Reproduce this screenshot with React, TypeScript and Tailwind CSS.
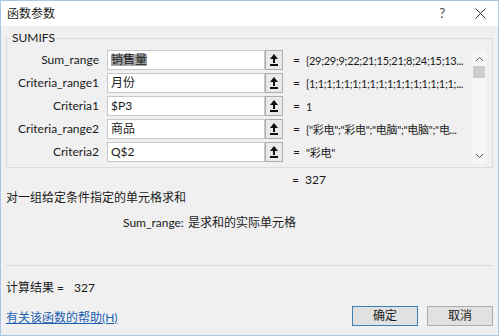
import React from "react";

const FONT = 'Lato, "Noto Sans CJK SC", sans-serif';

const rows = [
  { label: "Sum_range", value: "销售量", highlight: true, result: "{29;29;9;22;21;15;21;8;24;15;13..." },
  { label: "Criteria_range1", value: "月份", result: "{1;1;1;1;1;1;1;1;1;1;1;1;1;1;1;1;1;..." },
  { label: "Criteria1", value: "$P3", result: "1" },
  { label: "Criteria_range2", value: "商品", result: '{"彩电";"彩电";"电脑";"电脑";"电...' },
  { label: "Criteria2", value: "Q$2", result: '"彩电"' },
];

function UpButton() {
  return (
    <div className="w-[18px] h-[20px] border border-[#adadad] bg-[#e9e9e9] flex items-center justify-center">
      <svg width="8" height="12" viewBox="0 0 8 12">
        <path d="M4 0 L8 5 L5 5 L5 9 L3 9 L3 5 L0 5 Z" fill="#111" />
        <rect x="0" y="10" width="8" height="2" fill="#111" />
      </svg>
    </div>
  );
}

export default function App() {
  return (
    <div
      className="w-[499px] h-[336px] bg-[#f0f0f0] border border-[#a9c6e6] flex flex-col text-[12px] text-[#1a1a1a] overflow-hidden"
      style={{ fontFamily: FONT }}
    >
      <div className="h-[25px] bg-white flex items-center pl-[6px] pr-[12px] shrink-0">
        <span className="text-[12px] leading-none">函数参数</span>
        <span className="ml-auto text-[13px] leading-none text-[#444] mr-[30px]">?</span>
        <svg width="11" height="11" viewBox="0 0 11 11">
          <path d="M0.5 0.5 L10.5 10.5 M10.5 0.5 L0.5 10.5" stroke="#333" strokeWidth="1" />
        </svg>
      </div>
      <div className="px-[5px] pt-[12px] flex flex-col">
        <div className="relative border border-[#dcdcdc] h-[130px] pt-[11px] flex">
          <span className="absolute -top-[9px] left-[4px] bg-[#f0f0f0] px-[1px] leading-[16px] text-[12px]">
            SUMIFS
          </span>
          <div className="flex flex-col gap-[3px]">
            {rows.map((r) => (
              <div key={r.label} className="flex items-center h-[20px]">
                <div className="w-[100px] text-right pr-[8px] leading-none whitespace-nowrap">{r.label}</div>
                <div className="w-[158px] h-[20px] border border-[#c8c8c8] bg-white flex items-center pl-[3px] leading-none">
                  {r.highlight ? <span className="bg-[#a8a8a8]">{r.value}</span> : r.value}
                </div>
                <UpButton />
                <div className="w-[23px] pl-[10px] leading-none">=</div>
                <div className="w-[166px] whitespace-nowrap leading-none text-[11px] tracking-[-0.3px]">{r.result}</div>
              </div>
            ))}
          </div>
          <div className="ml-auto mr-[6px] mt-[1px] w-[14px] h-[113px] bg-[#f6f6f6] flex flex-col items-center">
            <svg width="9" height="6" viewBox="0 0 9 6" className="mt-[5px]">
              <path d="M1 5 L4.5 1.5 L8 5" stroke="#555" fill="none" strokeWidth="1" />
            </svg>
            <div className="w-[12px] h-[12px] bg-[#cdcdcd] mt-[4px]" />
            <svg width="9" height="6" viewBox="0 0 9 6" className="mt-auto mb-[5px]">
              <path d="M1 1 L4.5 4.5 L8 1" stroke="#555" fill="none" strokeWidth="1" />
            </svg>
          </div>
        </div>
        <div className="flex h-[24px] items-center pl-[286px] leading-none">
          <span className="w-[13px]">=</span>
          <span>327</span>
        </div>
        <div className="leading-none">对一组给定条件指定的单元格求和</div>
        <div className="flex pl-[117px] pt-[13px] leading-none">
          <span className="w-[65px]">Sum_range:</span>
          <span>是求和的实际单元格</span>
        </div>
        <div className="h-[36px]" />
        <div className="border-t border-[#dcdcdc]" />
        <div className="pt-[16px] leading-none flex">
          <span>计算结果 =</span>
          <span className="ml-[10px]">327</span>
        </div>
        <div className="flex items-center mt-[12px]">
          <span className="text-[#1a5fb4] underline leading-none pt-[4px]">有关该函数的帮助(H)</span>
          <div className="ml-auto flex gap-[9px]">
            <div className="w-[66px] h-[20px] border border-[#3c7fb1] bg-[#e1e1e1] flex items-center justify-center leading-none">
              确定
            </div>
            <div className="w-[66px] h-[20px] border border-[#adadad] bg-[#e1e1e1] flex items-center justify-center leading-none">
              取消
            </div>
          </div>
        </div>
      </div>
    </div>
  );
}
